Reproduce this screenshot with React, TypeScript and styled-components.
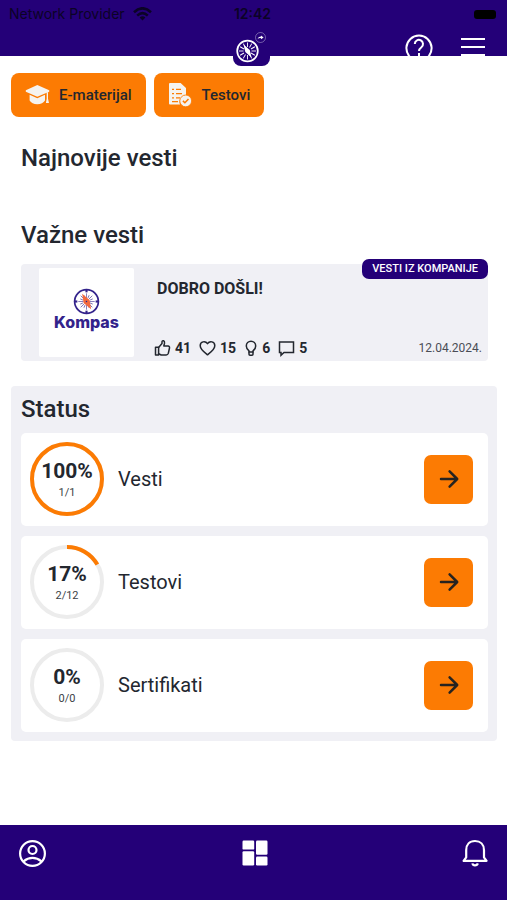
import React from "react";
import styled, { createGlobalStyle } from "styled-components";

const purple = "#240078";
const orange = "#fc7b03";
const ink = "#23272f";
const panel = "#f0f0f5";

const GlobalStyle = createGlobalStyle`
  *, *::before, *::after { box-sizing: border-box; }
  body { margin: 0; background: #fff; color: ${ink}; font-family: Roboto, "Liberation Sans", sans-serif; }
  button { font: inherit; color: inherit; border: 0; padding: 0; background: none; cursor: pointer; }
  h1, h2, h3, p { margin: 0; }
  svg { display: block; flex: none; }
`;

const Page = styled.div`
  min-height: 100vh;
  display: flex;
  flex-direction: column;
`;

const Header = styled.header`
  background: ${purple};
`;

const StatusBar = styled.div`
  display: grid;
  grid-template-columns: 1fr auto 1fr;
  align-items: center;
  height: 28px;
  padding: 0 11px 0 9px;
  font-family: Inter, sans-serif;
  font-size: 14px;
  line-height: 28px;
  color: #0b0326;
`;

const Carrier = styled.div`
  display: flex;
  align-items: center;
  gap: 8px;
  white-space: nowrap;
`;

const Clock = styled.div`
  font-weight: 600;
`;

const Battery = styled.div`
  justify-self: end;
  width: 22px;
  height: 9px;
  border-radius: 3px;
  background: #000;
`;

const NavRow = styled.div`
  display: grid;
  grid-template-columns: 1fr auto 1fr;
  height: 28px;
  padding: 0 22px 0 18px;
`;

const LogoTab = styled.a`
  grid-column: 2;
  height: 38px;
  width: 37px;
  border-radius: 0 0 8px 8px;
  background: ${purple};
`;

const NavActions = styled.div`
  display: flex;
  justify-content: flex-end;
  align-items: flex-start;
  gap: 28px;
  height: 28px;
  padding-top: 5px;
  overflow: hidden;
`;

const Content = styled.main`
  flex: 1;
  padding: 17px 10px 20px 11px;
`;

const QuickLinks = styled.div`
  display: flex;
  gap: 8px;
`;

const QuickButton = styled.button`
  display: flex;
  align-items: center;
  gap: 9px;
  height: 44px;
  padding: 0 14px;
  border-radius: 8px;
  background: ${orange};
  font-size: 15px;
  font-weight: 500;
`;

const Heading = styled.h2`
  padding-left: 10px;
  font-size: 24px;
  line-height: 28px;
  font-weight: 500;
`;

const Latest = styled.section`
  padding-top: 27px;
`;

const Important = styled.section`
  padding-top: 49px;
`;

const NewsCard = styled.article`
  position: relative;
  display: flex;
  gap: 23px;
  margin: 15px 9px 0 10px;
  padding: 4px 6px 4px 18px;
  border-radius: 4px;
  background: ${panel};
`;

const Badge = styled.span`
  position: absolute;
  top: -5px;
  right: 0;
  padding: 0 10px;
  border-radius: 7px;
  background: ${purple};
  color: #fff;
  font-size: 11px;
  line-height: 20px;
  font-weight: 500;
`;

const Thumb = styled.div`
  display: flex;
  flex-direction: column;
  align-items: center;
  justify-content: center;
  width: 95px;
  height: 89px;
  padding-bottom: 8px;
  border-radius: 2px;
  background: #fff;
`;

const Brand = styled.span`
  color: #33238b;
  font-family: Inter, sans-serif;
  font-size: 16px;
  line-height: 14px;
  font-weight: 800;
`;

const NewsBody = styled.div`
  flex: 1;
  display: flex;
  flex-direction: column;
  justify-content: space-between;
  padding-top: 12px;
`;

const NewsTitle = styled.h3`
  font-size: 16px;
  line-height: 18px;
  font-weight: 700;
`;

const NewsMeta = styled.div`
  display: flex;
  align-items: center;
  justify-content: space-between;
`;

const Reactions = styled.div`
  display: flex;
  gap: 8px;
  margin-left: -3px;
`;

const Reaction = styled.button`
  display: flex;
  align-items: center;
  gap: 4px;
  font-size: 14px;
  line-height: 18px;
  font-weight: 700;
`;

const NewsDate = styled.time`
  font-size: 12px;
  line-height: 18px;
  color: #4a4d55;
`;

const StatusPanel = styled.section`
  margin-top: 25px;
  padding: 9px 9px 9px 0;
  border-radius: 4px;
  background: ${panel};
`;

const StatusList = styled.ul`
  display: flex;
  flex-direction: column;
  gap: 10px;
  margin: 10px 0 0 10px;
  padding: 0;
  list-style: none;
`;

const StatusRow = styled.li`
  display: flex;
  align-items: center;
  gap: 14px;
  padding: 9px 15px 10px 9px;
  border-radius: 5px;
  background: #fff;
`;

const Ring = styled.div`
  display: grid;
  width: 74px;
  height: 74px;
  > * { grid-area: 1 / 1; }
`;

const RingText = styled.div`
  display: flex;
  flex-direction: column;
  align-items: center;
  justify-content: center;
  padding-top: 4px;
`;

const Percent = styled.span`
  font-size: 21px;
  line-height: 24px;
  font-weight: 700;
`;

const Fraction = styled.span`
  font-size: 11px;
  line-height: 20px;
  color: #3c3f46;
`;

const RowLabel = styled.span`
  flex: 1;
  font-size: 20px;
  line-height: 24px;
`;

const OpenButton = styled.button`
  display: flex;
  align-items: center;
  justify-content: center;
  width: 49px;
  height: 49px;
  border-radius: 7px;
  background: ${orange};
`;

const TabBar = styled.nav`
  display: flex;
  justify-content: space-between;
  align-items: flex-start;
  height: 75px;
  padding: 14px 19px 0 18px;
  background: ${purple};
`;

const IconButton = styled.button`
  display: block;
  color: #fff;
`;

function Compass({ size, color, needle }: { size: number; color: string; needle: string }) {
  const rays = Array.from({ length: 16 }, (_, i) => i * 22.5);
  return (
    <svg width={size} height={size} viewBox="0 0 28 28" fill="none" stroke={color}>
      <circle cx="14" cy="14" r="12.3" strokeWidth="1.8" />
      {rays.map((a, i) => (
        <path key={a} d={i % 2 ? "M14 7V10" : "M14 5.5V11"} strokeWidth="0.6" transform={`rotate(${a} 14 14)`} />
      ))}
      {[0, 90, 180, 270].map((a) => (
        <path key={a} d="M14 1V4.5" strokeWidth="2.2" transform={`rotate(${a} 14 14)`} />
      ))}
      <path d="M9.5 6L17.2 12.5L18.8 22L11 15.5Z" fill={needle} stroke="none" />
      <circle cx="14" cy="14" r="0.8" fill={color} stroke="none" />
    </svg>
  );
}

const HeaderLogo = () => (
  <svg width="37" height="38" viewBox="0 0 37 38" fill="none" stroke="#fff">
    <circle cx="14.5" cy="23" r="10.3" strokeWidth="1.7" />
    {Array.from({ length: 12 }, (_, i) => (
      <path key={i} d="M14.5 14.5V19" strokeWidth="0.9" transform={`rotate(${i * 30} 14.5 23)`} />
    ))}
    <path d="M10.5 16.5L16.8 22L18.5 29.5L12.3 24Z" fill="#fff" stroke="none" />
    <circle cx="27.5" cy="9.5" r="5" strokeWidth="0.6" opacity="0.6" />
    <path d="M24.5 11.2Q25.3 8.3 28 8.6L28 7.4L30.6 9.6L28 11.2V10.2Q26 9.8 24.5 11.2Z" fill="#fff" stroke="none" />
  </svg>
);

const Wifi = () => (
  <svg width="19" height="14" viewBox="0 0 19 14" fill="none" stroke="#0b0326" strokeWidth="2.6">
    <path d="M1 5.2Q9.5 -2.6 18 5.2" />
    <path d="M4.2 8.6Q9.5 3.8 14.8 8.6" />
    <path d="M6.6 10.4Q9.5 8 12.4 10.4L9.5 13.4Z" fill="#0b0326" stroke="none" />
  </svg>
);

const Help = () => (
  <svg width="28" height="28" viewBox="0 0 28 28" fill="none" stroke="#fff" strokeWidth="2">
    <path d="M7 26.2L4.2 23.1A12.6 12.6 0 1 1 23.8 23.1L21 26.2" />
    <path d="M9.8 11A4.1 4.1 0 1 1 16.4 14.2C14.8 15.4 14 16 14 18" />
    <path d="M14 20V23" />
  </svg>
);

const Menu = () => (
  <svg width="24" height="24" viewBox="0 0 24 24" stroke="#fff" strokeWidth="2">
    <path d="M0 6H24M0 14H24M0 22H24" />
  </svg>
);

const GradCap = () => (
  <svg width="25" height="20" viewBox="0 0 25 20" fill="#f5f3f0">
    <path d="M12.3 0L24.2 5.2V6.7L12.3 11.8L0.8 6.7V5.2Z" />
    <path d="M4.6 9.8L12.3 13.2L20 9.8V15.6Q17.8 19.2 12.3 19.2T4.6 15.6Z" />
    <path d="M21.7 7.4L23 6.9V13.8L24 18H20.9L21.7 13.8Z" />
  </svg>
);

const TestSheet = () => (
  <svg width="25" height="26" viewBox="0 0 25 26">
    <path d="M2 1H12.6L18 6V13A7 7 0 0 0 12 22.6H2Q1 22.6 1 21.5V2Q1 1 2 1Z" fill="#f5f3f0" />
    <path d="M4 7.3H6M8 7.3H13M4 11.6H6M8 11.6H14M4 15.9H6M8 15.9H12M4 19.6H10" stroke={orange} strokeWidth="1.2" />
    <circle cx="17.7" cy="18.9" r="5.9" fill="#f5f3f0" stroke={orange} strokeWidth="0.8" />
    <path d="M14.9 18.9L16.9 20.8L20.5 17" fill="none" stroke={orange} strokeWidth="1.5" />
  </svg>
);

const line = { fill: "none", stroke: ink, strokeWidth: 1.5, strokeLinejoin: "round", strokeLinecap: "round" } as const;

const Like = () => (
  <svg width="17" height="18" viewBox="0 0 17 18" {...line}>
    <path d="M1.5 8.2H4.6V16H1.5Z" />
    <path d="M4.6 8.4L8 4.6V2.6Q8.3 1.4 9.6 1.8Q10.8 2.3 10.5 4.2L9.8 7H14Q15.8 7.2 15.5 9L14.3 14.4Q13.8 16 12.2 16H7.2L4.6 14.8" />
  </svg>
);

const Heart = () => (
  <svg width="17" height="18" viewBox="0 0 17 18" {...line}>
    <path d="M8.5 15.8C5 13 1.2 10.3 1.2 6.7C1.2 2.5 6.3 1.4 8.5 4.7C10.7 1.4 15.8 2.5 15.8 6.7C15.8 10.3 12 13 8.5 15.8Z" />
  </svg>
);

const Bulb = () => (
  <svg width="14" height="18" viewBox="0 0 14 18" {...line}>
    <path d="M5 13V11.8C3.4 10.6 2.3 9 2.3 6.9A4.7 4.7 0 0 1 11.7 6.9C11.7 9 10.6 10.6 9 11.8V13Z" />
    <path d="M5 13V15.3Q5 16.2 6 16.2H8Q9 16.2 9 15.3V13" />
  </svg>
);

const Comment = () => (
  <svg width="17" height="18" viewBox="0 0 17 18" {...line} strokeLinejoin="miter">
    <path d="M1.5 3H15.5V13.4H6L3 16.2V13.4H1.5Z" />
  </svg>
);

const Arrow = () => (
  <svg width="20" height="20" viewBox="0 0 20 20" fill="none" stroke="#262320" strokeWidth="2.5" strokeLinecap="round" strokeLinejoin="round">
    <path d="M2 10H18M10.6 2.4L18.2 10L10.6 17.6" />
  </svg>
);

const Account = () => (
  <svg width="29" height="29" viewBox="0 0 29 29" fill="none" stroke="#fff" strokeWidth="2.2">
    <circle cx="14.5" cy="14.5" r="12.4" />
    <circle cx="14.5" cy="11" r="4" />
    <path d="M5.6 22.4Q9.6 18.9 14.5 18.9T23.4 22.4" />
  </svg>
);

const Dashboard = () => (
  <svg width="26" height="28" viewBox="0 0 26 28" fill="#fff">
    <rect x="0.5" y="1.6" width="11.7" height="9" rx="1.2" />
    <rect x="0.5" y="12.2" width="11.7" height="14.2" rx="1.2" />
    <rect x="14" y="1.6" width="11.5" height="14.2" rx="1.2" />
    <rect x="14" y="17.6" width="11.5" height="8.8" rx="1.2" />
  </svg>
);

const Bell = () => (
  <svg width="26" height="29" viewBox="0 0 26 29" fill="none" stroke="#fff" strokeWidth="2.2">
    <path d="M1.6 21.8H24.6L22 18.4V11.2C22 5.6 18.4 2 13 2S4.2 5.6 4.2 11.2V18.4Z" strokeLinejoin="round" />
    <path d="M10.4 24.4Q10.8 26.4 13 26.4T15.8 24.4" />
  </svg>
);

function Progress({ done, total }: { done: number; total: number }) {
  const share = total ? done / total : 0;
  const length = 2 * Math.PI * 35;
  return (
    <Ring>
      <svg width="74" height="74" viewBox="0 0 74 74" fill="none" strokeWidth="4">
        <circle cx="37" cy="37" r="35" stroke="#ececec" />
        {share > 0 && (
          <circle
            cx="37"
            cy="37"
            r="35"
            stroke={orange}
            strokeDasharray={`${share * length} ${length}`}
            transform="rotate(-90 37 37)"
          />
        )}
      </svg>
      <RingText>
        <Percent>{Math.round(share * 100)}%</Percent>
        <Fraction>{done}/{total}</Fraction>
      </RingText>
    </Ring>
  );
}

const statuses = [
  { label: "Vesti", done: 1, total: 1 },
  { label: "Testovi", done: 2, total: 12 },
  { label: "Sertifikati", done: 0, total: 0 },
];

const reactions = [
  { name: "Sviđa mi se", icon: <Like />, count: 41 },
  { name: "Srce", icon: <Heart />, count: 15 },
  { name: "Ideja", icon: <Bulb />, count: 6 },
  { name: "Komentari", icon: <Comment />, count: 5 },
];

export default function App() {
  return (
    <Page>
      <GlobalStyle />
      <Header>
        <StatusBar>
          <Carrier>Network Provider <Wifi /></Carrier>
          <Clock>12:42</Clock>
          <Battery />
        </StatusBar>
        <NavRow>
          <LogoTab href="#" aria-label="Kompas"><HeaderLogo /></LogoTab>
          <NavActions>
            <IconButton aria-label="Pomoć"><Help /></IconButton>
            <IconButton aria-label="Meni"><Menu /></IconButton>
          </NavActions>
        </NavRow>
      </Header>

      <Content>
        <QuickLinks>
          <QuickButton><GradCap />E-materijal</QuickButton>
          <QuickButton><TestSheet />Testovi</QuickButton>
        </QuickLinks>

        <Latest>
          <Heading>Najnovije vesti</Heading>
        </Latest>

        <Important>
          <Heading>Važne vesti</Heading>
          <NewsCard>
            <Badge>VESTI IZ KOMPANIJE</Badge>
            <Thumb>
              <Compass size={27} color="#33238b" needle="#f26a3d" />
              <Brand>Kompas</Brand>
            </Thumb>
            <NewsBody>
              <NewsTitle>DOBRO DOŠLI!</NewsTitle>
              <NewsMeta>
                <Reactions>
                  {reactions.map((r) => (
                    <Reaction key={r.name} aria-label={`${r.name}: ${r.count}`}>{r.icon}{r.count}</Reaction>
                  ))}
                </Reactions>
                <NewsDate dateTime="2024-04-12">12.04.2024.</NewsDate>
              </NewsMeta>
            </NewsBody>
          </NewsCard>
        </Important>

        <StatusPanel>
          <Heading>Status</Heading>
          <StatusList>
            {statuses.map((s) => (
              <StatusRow key={s.label}>
                <Progress done={s.done} total={s.total} />
                <RowLabel>{s.label}</RowLabel>
                <OpenButton aria-label={`Otvori: ${s.label}`}><Arrow /></OpenButton>
              </StatusRow>
            ))}
          </StatusList>
        </StatusPanel>
      </Content>

      <TabBar>
        <IconButton aria-label="Profil"><Account /></IconButton>
        <IconButton aria-label="Početna"><Dashboard /></IconButton>
        <IconButton aria-label="Obaveštenja"><Bell /></IconButton>
      </TabBar>
    </Page>
  );
}
